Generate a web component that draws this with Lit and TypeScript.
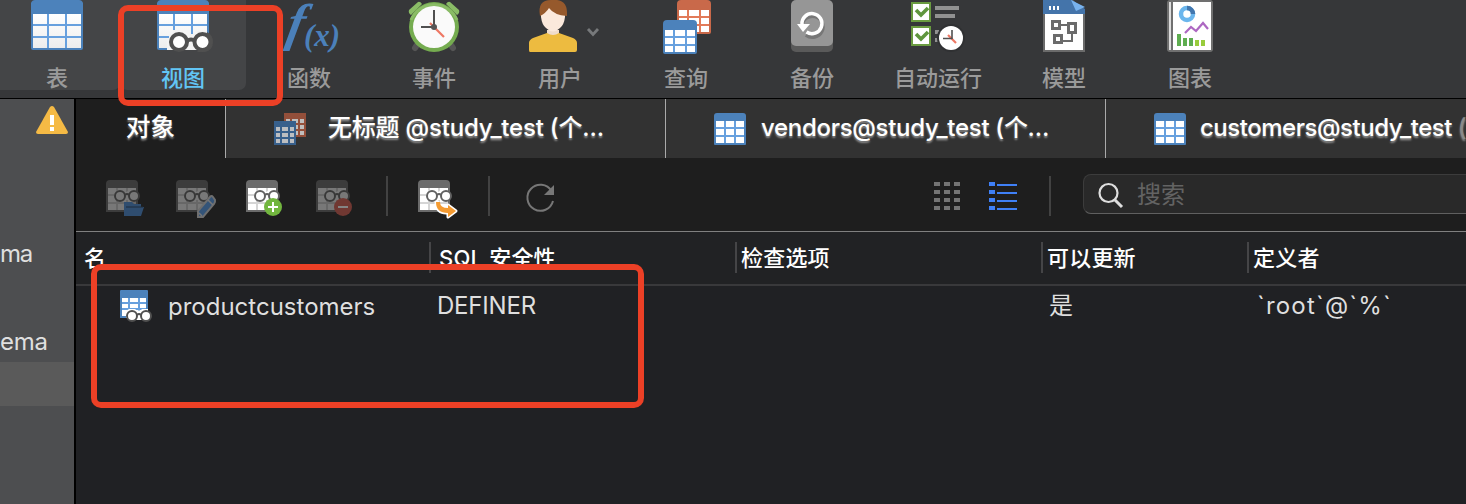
import { LitElement, html, svg, css } from "lit";
import { customElement, property } from "lit/decorators.js";
import { classMap } from "lit/directives/class-map.js";

const grid = (x: number, y: number, cols: number[][], rows: number[][], fill: string) =>
  rows.map(([ry, rh]) => cols.map(([cx, cw]) => svg`<rect x=${x + cx} y=${y + ry} width=${cw} height=${rh} fill=${fill}></rect>`));

const bigCols = [[2, 14], [18, 16], [36, 14]];
const bigRows = [[14, 10], [26, 10], [38, 10]];

const bigTable = svg`
  <path d="M0 3Q1 0 4 0H48Q51 0 52 3V48Q52 50 50 50H2Q0 50 0 48Z" fill="#4c82bb"></path>
  <rect x="2" y="14" width="48" height="34" fill="#67a0de"></rect>
  ${grid(0, 0, bigCols, bigRows, "url(#cell)")}`;

const cellGradient = svg`<defs><linearGradient id="cell" gradientUnits="userSpaceOnUse" x1="0" y1="14" x2="0" y2="50">
  <stop offset="0" stop-color="#fff"></stop><stop offset="1" stop-color="#ececec"></stop></linearGradient></defs>`;

const smallTable = (body: string, line: string, cell: string, r = 3) => svg`
  <path d="M0 ${r}Q0 0 ${r} 0H${32 - r}Q32 0 32 ${r}V31Q32 32 31 32H1Q0 32 0 31Z" fill=${body}></path>
  <rect x="2" y="8" width="28" height="22" fill=${line}></rect>
  ${grid(0, 0, [[2, 8], [12, 8], [22, 8]], [[8, 6], [16, 6], [24, 6]], cell)}`;

const queryTable = (body: string, line: string) => svg`
  <path d="M0 4Q0 0 4 0H30Q34 0 34 4V32Q34 34 32 34H2Q0 34 0 32Z" fill=${body}></path>
  <rect x="2" y="10" width="30" height="22" fill=${line}></rect>
  ${grid(0, 0, [[2, 8], [12, 10], [24, 8]], [[10, 6], [18, 6], [26, 6]], "#fff")}`;

const toolIcons: Record<string, unknown> = {
  table: svg`${cellGradient}${bigTable}`,
  view: svg`${cellGradient}${bigTable}
    <path d="M10 50V38H12V34H16V30H34V34H40V31H50V48L42 50Z" fill="#f3f3f3"></path>
    <path d="M50 32Q56 35 56 42Q56 50 48 52H40L42 50L50 48Z" fill="#505050"></path>
    <circle cx="22" cy="42" r="8" fill="#fff" stroke="#505050" stroke-width="4"></circle>
    <circle cx="45.500" cy="42" r="8" fill="#fff" stroke="#505050" stroke-width="4"></circle>
    <path d="M30 41Q34 38 38 41" stroke="#505050" stroke-width="4" fill="none"></path>`,
  event: svg`
    <path d="M9 45l-2 3M43 45l2 3" stroke="#555" stroke-width="6" stroke-linecap="round"></path>
    <path d="M1 10L10 2Q12 1 14 4L3 15Q0 13 1 10ZM51 10L42 2Q40 1 38 4L49 15Q52 13 51 10Z" fill="#8abc66"></path>
    <circle cx="26" cy="27" r="25" fill="#75ac50"></circle>
    <path d="M3 20A25 25 0 0 1 49 20" fill="none" stroke="#8abc66" stroke-width="3"></path>
    <circle cx="26" cy="27" r="21" fill="#fafafa"></circle>
    <path d="M22 23L36 37" stroke="#ee7763" stroke-width="2.2"></path>
    <path d="M26 10V27H13" stroke="#505050" stroke-width="2" fill="none"></path>
    <circle cx="26" cy="27" r="3" fill="#555"></circle>`,
  user: svg`<g transform="translate(-7 0)">
    <path d="M20 30H32V36Q26 40 20 36Z" fill="#f0dccb"></path>
    <path d="M3 52Q2 52 2 50V43Q2 40 6 38L20 33Q26 37 32 33L46 38Q50 40 50 43V50Q50 52 48 52Z" fill="#edbb40"></path>
    <path d="M14 8H38V17Q37 25 33 28Q26 35 19 28Q15 25 14 17Z" fill="#fbe9dc"></path>
    <path d="M13 16Q10 0 24 0H30Q41 1 40 16Q27 15 22 8Q19 13 13 16Z" fill="#96592c"></path></g>`,
  query: svg`<g transform="translate(17 0)">${queryTable("#c9694a", "#e27a59")}</g><g transform="translate(3 20)">${queryTable("#4c82bb", "#67a0de")}</g>`,
  backup: svg`
    <rect x="5" y="3" width="42" height="49" rx="5" fill="#5a5a5a"></rect>
    <rect x="5" y="0" width="42" height="46" rx="5" fill="#969696"></rect>
    <path d="M20 34A10.5 10.5 0 1 0 16 25" transform="translate(0 1)" stroke="#777" stroke-width="3.5" fill="none"></path>
    <path d="M20.500 32A10 10 0 1 0 16 24.500" stroke="#fff" stroke-width="3.500" fill="none"></path>
    <path d="M11 24H24L17 32Z" fill="#fff"></path>`,
  auto: svg`<g transform="translate(1 0)">
    <path d="M22 6H46V10H22ZM22 14H42V18H22ZM22 30H26V34H22ZM22 38H26V42H22Z" fill="#919191"></path>
    ${[2, 26].map(y => svg`<rect x="-1" y=${y + 1} width="18" height="18" fill="#fff" stroke="#6a9b40" stroke-width="2"></rect>
      <path d="M3 ${y + 8}L8 ${y + 13}L15 ${y + 6}" stroke="#5f963d" stroke-width="3.600" fill="none"></path>`)}
    <circle cx="38" cy="38" r="14" fill="#303133"></circle><circle cx="38" cy="38" r="12" fill="#fff"></circle>
    <path d="M35 35L43 43" stroke="#ee7763" stroke-width="2.200"></path>
    <path d="M39 30V38.500H30" stroke="#505050" stroke-width="1.600" fill="none"></path></g>`,
  model: svg`
    <path d="M5 0H35L47 12V52H5Z" fill="#6b6b6b"></path><path d="M7 14H45V50H7Z" fill="#fff"></path>
    <path d="M5 0H34L47 9V14H5Z" fill="#4474aa"></path><path d="M33 0L47 7L38 11Z" fill="#78b2ee"></path>
    <path d="M11 6H13V10H11ZM15 6H17V10H15ZM19 6H21V10H19Z" fill="#fff"></path>
    <g fill="none" stroke="#6b6b6b"><path d="M23 25H30M34 33V41H25" stroke-width="2"></path>
    <path d="M14.500 21.500H21.500V28.500H14.500ZM30.500 23.500H37.500V32.500H30.500ZM16.500 35.500H23.500V42.500H16.500Z" stroke-width="3"></path></g>`,
  chart: svg`
    <rect x="3" y="0" width="46" height="52" rx="3" fill="#707070"></rect><path d="M5 2H7V50H5Z" fill="#ddd"></path><path d="M9 2H47V50H9Z" fill="#fff"></path>
    <circle cx="23" cy="14" r="6" fill="none" stroke="#6bb6ed" stroke-width="4.500"></circle>
    <path d="M23 8A6 6 0 0 1 29 14" fill="none" stroke="#4276ad" stroke-width="4.500"></path>
    <path d="M21 33L27 27L32 31L39 23L44 29" fill="none" stroke="#ad67c2" stroke-width="2.200"></path>
    <path d="M13 34H17V46H13ZM19 38H23V46H19ZM25 38H29V46H25Z" fill="#5ead50"></path><path d="M31 40H35V46H31ZM37 40H41V46H37Z" fill="#98cc3c"></path>`,
};

@customElement("tool-tile")
export class ToolTile extends LitElement {
  @property() icon = "table";
  @property() label = "";
  @property({ type: Boolean, reflect: true }) active = false;
  @property({ type: Boolean }) menu = false;
  static styles = css`
    :host { display: flex; flex-direction: column; align-items: center; width: 126px; height: 90px; flex: none; color: #9a9a9a; box-sizing: border-box; }
    :host([active]) { color: #62c5f5; }
    .picture { display: block; width: 52px; height: 54px; overflow: visible; }
    .label { font-size: 22px; line-height: 32px; margin-top: 8px; font-weight: 500; white-space: nowrap; }
    .art { position: relative; }
    .chevron { position: absolute; left: 52px; top: 27px; width: 14px; height: 10px; }
    .formula { display: flex; width: 72px; height: 54px; color: #4b80ba; font: italic bold 52px/54px "Liberation Serif", serif; white-space: nowrap; }
    .big { width: 40px; height: 54px; flex: none; box-sizing: border-box; padding-left: 15px; margin-top: -4px; transform: skewX(-11deg); }
    .small { flex: none; font-size: 31px; line-height: 40px; padding-top: 16px; margin-left: -9px; height: 38px; }
  `;
  render() {
    return html`<div class="art">${this.icon === "fn"
        ? html`<div class="formula"><span class="big">f</span><span class="small">(x)</span></div>`
        : html`<svg class="picture" viewBox="0 0 52 54">${toolIcons[this.icon]}</svg>`}
      ${this.menu ? html`<svg class="chevron" viewBox="0 0 14 10"><path d="M2 2L7 7.500L12 2" fill="none" stroke="#77797b" stroke-width="2.800"></path></svg>` : null}</div>
      <div class="label">${this.label}</div>`;
  }
}

const badges: Record<string, unknown> = {
  open: svg`<path d="M18 22H26L28 24H35V27H38L35 36H18Z" fill="#2f4d6f"></path><path d="M20 27H37" stroke="#1e2d3c" stroke-width="1"></path>`,
  edit: svg`<path d="M22 37V31L34 17Q35.500 15 37 17L39 20Q39.500 22 38 24L27 37Z" fill="#345478" stroke="#6e6e6e" stroke-width="2"></path><path d="M32 20L37 25M23 33L26 36" stroke="#777" stroke-width="1.500"></path>`,
  add: svg`<circle cx="27" cy="27" r="9" fill="#72b63f"></circle><path d="M27 22V32M22 27H32" stroke="#fff" stroke-width="2"></path>`,
  remove: svg`<circle cx="27" cy="27" r="9" fill="#703832"></circle><path d="M22 27H32" stroke="#858585" stroke-width="2"></path>`,
  export: svg`<path d="M20 22Q21 29 30 29V25L38 31L30 37V33Q18 34 18 22Z" fill="#f49b32" stroke="#fff" stroke-width="3" stroke-linejoin="round"></path><path d="M18 22H22Q22 28 30 28V25L38 31L30 37V33Q18 33 18 22Z" fill="#f49b32"></path>`,
};

@customElement("view-action")
export class ViewAction extends LitElement {
  @property() kind = "open";
  @property({ type: Boolean }) off = false;
  static styles = css`
    :host { display: block; width: 42px; height: 40px; flex: none; }
    .icon { display: block; width: 42px; height: 40px; }
    .off { opacity: 0.4; }
  `;
  render() {
    return html`<svg class="icon" viewBox="0 0 42 40">
      <g class=${classMap({ off: this.off })}>
        <path d="M0 4Q0 0 4 0H28Q32 0 32 4V32H0Z" fill="#6b6b6b"></path>
        <path d="M2 8H30V30H2Z" fill="#d5d5d5"></path>
        ${grid(0, 0, [[2, 8], [12, 8], [22, 8]], [[8, 6], [16, 6], [24, 6]], "#fff")}
        <path d="M8 12Q14 8 20 12Q26 8 32 12V20H8Z" fill="#fff"></path>
        <circle cx="14" cy="16" r="5" fill="#fff" stroke="#616161" stroke-width="2"></circle>
        <circle cx="28" cy="16" r="5" fill="#fff" stroke="#616161" stroke-width="2"></circle>
        <path d="M19 15Q21 13 23 15" stroke="#616161" stroke-width="2" fill="none"></path>
      </g>${badges[this.kind]}</svg>`;
  }
}

const tools = [
  { icon: "table", label: "表" }, { icon: "view", label: "视图", active: true }, { icon: "fn", label: "函数" },
  { icon: "event", label: "事件" }, { icon: "user", label: "用户", menu: true }, { icon: "query", label: "查询" },
  { icon: "backup", label: "备份" }, { icon: "auto", label: "自动运行" }, { icon: "model", label: "模型" }, { icon: "chart", label: "图表" },
];

@customElement("app-root")
export class AppRoot extends LitElement {
  static styles = css`
    :host { display: block; position: relative; width: 1466px; height: 504px; overflow: hidden; background: #202124; color: #dfdfdf; font-family: Inter, "Noto Sans CJK SC", sans-serif; }
    .toolbar { height: 98px; background: #363739; border-bottom: 1px solid #000; display: flex; overflow: hidden; }
    .tiles { display: flex; margin-left: -6px; height: 90px; }
    .tiles tool-tile:nth-child(-n + 2) { background: #444547; border-radius: 0 0 7px 7px; }
    .tiles tool-tile:nth-child(4) { margin-left: -1px; }
    .body { display: flex; height: 405px; }
    .sidebar { width: 74px; flex: none; border-right: 2px solid #000; background: #4d4e50; display: flex; flex-direction: column; overflow: hidden; }
    .warn { width: 32px; height: 28px; margin: 7px 0 0 36px; flex: none; }
    .node { font-size: 24px; line-height: 44px; height: 44px; flex: none; letter-spacing: -0.3px; }
    .first { margin-top: 98px; letter-spacing: -1.2px; }
    .second { margin-top: 44px; }
    .picked { height: 44px; background: #5a5a5a; flex: none; margin-top: -2px; }
    .main { flex: 1; min-width: 0; }
    .tabs { display: flex; height: 59px; }
    .tab { width: 439px; flex: none; border-left: 1px solid #aaa; background: #323232; display: flex; align-items: center; color: #fff; font-size: 24px; font-weight: 500; white-space: nowrap; text-shadow: 0 2px 2px rgba(255, 255, 255, 0.45); overflow: hidden; }
    .tab.current { width: 149px; border-left: 0; background: #1e1e1e; justify-content: center; font-size: 24.5px; }
    .tab-icon { width: 34px; height: 32px; margin-left: 48px; flex: none; }
    .tab-text { line-height: 57px; height: 59px; letter-spacing: -0.1px; }
    .t1 { margin-left: 20px; letter-spacing: -0.2px; } .t2 { margin-left: 13px; letter-spacing: -0.3px; } .t3 { margin-left: 12px; letter-spacing: -0.48px; }
    .faded { color: #8a8a8a; }
    .actions { display: flex; height: 73px; background: #1e1e1e; border-bottom: 1px solid #808080; align-items: flex-start; }
    .group { display: flex; gap: 28px; padding: 22px 28px 0 30px; }
    .rule { width: 2px; height: 40px; background: #424242; margin-top: 18px; flex: none; }
    .refresh { width: 32px; height: 34px; margin: 23px 0 0 34px; flex: none; }
    .modes { display: flex; gap: 27px; margin: 24px 32px 0 378px; flex: none; }
    .mode { width: 28px; height: 28px; display: block; }
    .search { display: flex; align-items: center; width: 420px; height: 38px; flex: none; margin: 16px 0 0 32px; border: 1px solid #3c3c3c; border-bottom-color: #606060; border-radius: 8px; background: #292929; font-size: 24px; line-height: 36px; color: #636363; }
    .search span { margin-top: 2px; }
    .lens { width: 28px; height: 28px; margin: 2px 13px 0 12px; }
    .head, .row { display: grid; grid-template-columns: 353px 306px 306px 206px 1fr; }
    .head { height: 52px; border-bottom: 2px solid #39393b; font-size: 22px; font-weight: 500; color: #fff; background: #212224; }
    .th { line-height: 52px; padding-left: 8px; height: 52px; background: linear-gradient(#454547, #454547) no-repeat 0 10px / 2px 31px; white-space: nowrap; letter-spacing: 0.2px; }
    .th:first-child { background: none; }
    .th:nth-child(2) { padding-left: 10px; }
    .th:nth-child(n + 3) { padding-left: 6px; }
    .row { height: 42px; font-size: 24px; line-height: 40px; }
    .td { white-space: nowrap; padding-left: 8px; letter-spacing: -0.2px; }
    .name { display: flex; padding-left: 44px; letter-spacing: 0; line-height: 42px; }
    .row-icon { width: 34px; height: 34px; margin: 4px 14px 0 0; }
    .owner { padding-left: 10px; letter-spacing: 1.2px; }
    .mark { position: absolute; border: 6px solid #ec4026; border-radius: 10px; box-sizing: border-box; }
    .mark-view { left: 118px; top: 5px; width: 165px; height: 101px; }
    .mark-row { left: 91px; top: 264px; width: 553px; height: 144px; }
  `;

  private tableIcon() {
    return html`<svg class="tab-icon" viewBox="0 0 34 32">${smallTable("#4c82bb", "#67a0de", "#fff")}</svg>`;
  }

  render() {
    return html`
      <div class="toolbar"><div class="tiles">${tools.map(t => html`<tool-tile .icon=${t.icon} .label=${t.label} ?active=${!!t.active} .menu=${!!t.menu}></tool-tile>`)}</div></div>
      <div class="body">
        <div class="sidebar">
          <svg class="warn" viewBox="0 0 32 28"><path d="M14 1Q16 -1 18 1L32 26Q32 28 30 28H2Q0 28 0 26Z" fill="#f5ba45"></path><path d="M14 9H18V19H14ZM14 21H18V25H14Z" fill="#fff"></path></svg>
          <div class="node first">ma</div>
          <div class="node second">ema</div>
          <div class="picked"></div>
        </div>
        <div class="main">
          <div class="tabs">
            <div class="tab current"><span class="tab-text">对象</span></div>
            <div class="tab"><svg class="tab-icon" viewBox="0 0 34 32">
              <path d="M10 0H32V24H10Z" fill="#934f3a"></path>${grid(10, 0, [[2, 4], [8, 6], [16, 4]], [[6, 4], [12, 4], [18, 4]], "#c0bebd")}
              <path d="M0 8H22V32H0Z" fill="#38608c"></path>${grid(0, 8, [[2, 4], [8, 6], [16, 4]], [[6, 4], [12, 4], [18, 4]], "#bcbec1")}
            </svg><span class="tab-text t1">无标题 @study_test (个…</span></div>
            <div class="tab">${this.tableIcon()}<span class="tab-text t2">vendors@study_test (个…</span></div>
            <div class="tab">${this.tableIcon()}<span class="tab-text t3">customers@study_test <span class="faded">(</span></span></div>
          </div>
          <div class="actions">
            <div class="group">
              <view-action kind="open" off></view-action><view-action kind="edit" off></view-action>
              <view-action kind="add"></view-action><view-action kind="remove" off></view-action>
            </div>
            <div class="rule"></div>
            <div class="group"><view-action kind="export"></view-action></div>
            <div class="rule"></div>
            <svg class="refresh" viewBox="0 0 32 34"><path d="M27.500 10A13 13 0 1 0 29 20" fill="none" stroke="#777" stroke-width="2"></path><path d="M30 4V14H20Z" fill="#777"></path></svg>
            <div class="modes">
              <svg class="mode" viewBox="0 0 28 28">${grid(0, 0, [[0, 6], [10, 6], [20, 6]], [[0, 4], [8, 4], [16, 4], [24, 4]], "#747474")}</svg>
              <svg class="mode" viewBox="0 0 28 28">${[0, 8, 16, 24].map(y => svg`<path d="M0 ${y}H6V${y + 4}H0ZM8 ${y + 2}H28V${y + 4}H8Z" fill="#3f80f6"></path>`)}</svg>
            </div>
            <div class="rule"></div>
            <div class="search"><svg class="lens" viewBox="0 0 28 28"><circle cx="12.500" cy="12" r="9" fill="none" stroke="#dedede" stroke-width="2.200"></circle><path d="M19 19L26 26" stroke="#dedede" stroke-width="3"></path></svg><span>搜索</span></div>
          </div>
          <div class="head"><div class="th">名</div><div class="th">SQL 安全性</div><div class="th">检查选项</div><div class="th">可以更新</div><div class="th">定义者</div></div>
          <div class="row">
            <div class="td name"><svg class="row-icon" viewBox="0 0 34 34">
              <path d="M0 1Q0 0 1 0H27Q28 0 28 1V28H0Z" fill="#4c82bb"></path><path d="M2 8H26V26H2Z" fill="#67a0de"></path>
              ${grid(0, 0, [[2, 6], [10, 8], [20, 6]], [[8, 4], [14, 4], [20, 6]], "#fff")}
              <path d="M6 28V21L9 19H15L19 22L22 19H28V28Z" fill="#fff"></path>
              <path d="M12 20.500H26V30H12Z" fill="#fff"></path>
              <circle cx="12" cy="26" r="5" fill="#fff" stroke="#505050" stroke-width="2"></circle><circle cx="26" cy="26" r="5" fill="#fff" stroke="#505050" stroke-width="2"></circle>
              <path d="M17 25Q19 23 21 25" stroke="#505050" stroke-width="2" fill="none"></path>
            </svg><span>productcustomers</span></div>
            <div class="td">DEFINER</div><div class="td"></div><div class="td">是</div><div class="td owner">\`root\`@\`%\`</div>
          </div>
        </div>
      </div>
      <div class="mark mark-view"></div><div class="mark mark-row"></div>`;
  }
}
